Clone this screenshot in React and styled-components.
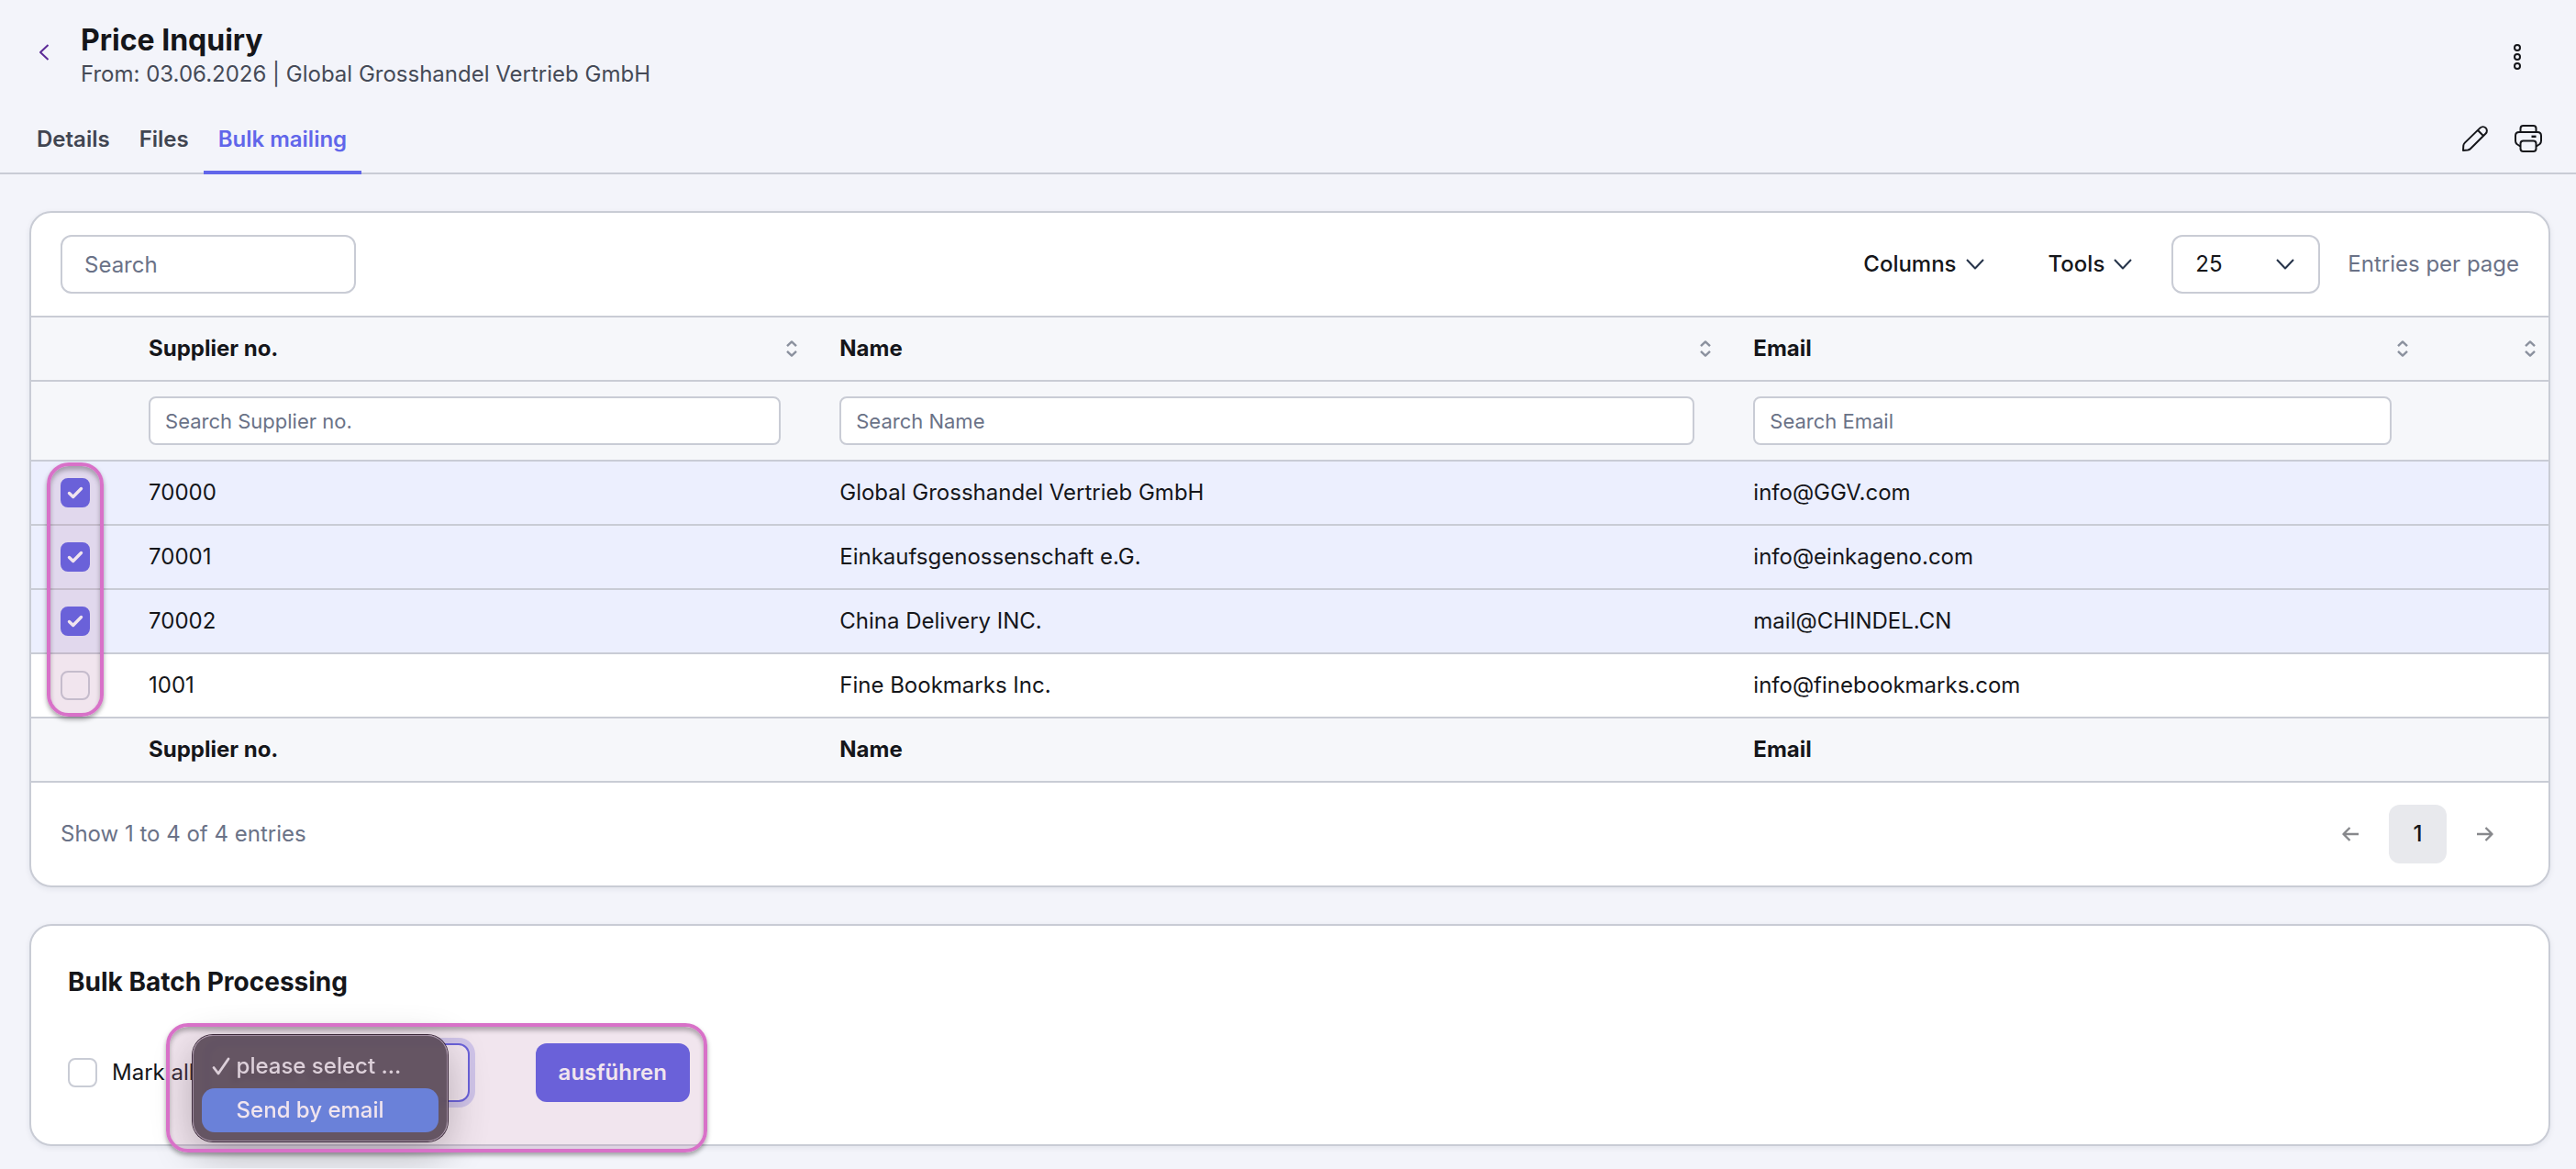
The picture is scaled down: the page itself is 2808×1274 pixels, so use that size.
import React, { useState } from 'react'
import styled, { createGlobalStyle } from 'styled-components'

const GlobalStyle = createGlobalStyle`
    *, *::before, *::after {
        box-sizing: border-box;
    }
    body {
        margin: 0;
        background: #f3f4fa;
        color: #15161a;
        font-family: Inter, "Liberation Sans", sans-serif;
        font-size: 24px;
        line-height: 32px;
    }
    button, input, select {
        font: inherit;
        color: inherit;
    }
`

const columns = [
    { key: 'no', label: 'Supplier no.' },
    { key: 'name', label: 'Name' },
    { key: 'email', label: 'Email' }
]

const suppliers = [
    { no: '70000', name: 'Global Grosshandel Vertrieb GmbH', email: 'info@GGV.com' },
    { no: '70001', name: 'Einkaufsgenossenschaft e.G.', email: 'info@einkageno.com' },
    { no: '70002', name: 'China Delivery INC.', email: 'mail@CHINDEL.CN' },
    { no: '1001', name: 'Fine Bookmarks Inc.', email: 'info@finebookmarks.com' }
]

function Chevron() {
    return (
        <Icon width="20" height="12" viewBox="0 0 20 12" stroke="#26344a">
            <path d="M1 1l9 9.5L19 1" />
        </Icon>
    )
}

function SortIcon() {
    return (
        <Icon width="12" height="18" viewBox="0 0 12 18" stroke="#8b919e" strokeWidth="2.4">
            <path d="M1 6.2l5-4.8 5 4.8M1 11.8l5 4.8 5-4.8" />
        </Icon>
    )
}

function Arrow({ flip }) {
    return (
        <Icon width="18" height="16" viewBox="0 0 18 16" stroke="#87888c" strokeWidth="2.4">
            <path d={flip ? 'M0 8h17M9.5 1l7 7-7 7' : 'M18 8H1M8.5 1l-7 7 7 7'} />
        </Icon>
    )
}

function Checkbox({ label, checked, onChange }) {
    return (
        <CheckBox>
            <input type="checkbox" aria-label={label} checked={checked} onChange={onChange} />
            {checked && (
                <Icon width="18" height="14" viewBox="0 0 18 14" stroke="#fff" strokeWidth="3.4" strokeLinecap="round">
                    <path d="M2.5 7.5l4.2 4L15.5 2.5" />
                </Icon>
            )}
        </CheckBox>
    )
}

function App() {

    const [selected, setSelected] = useState(['70000', '70001', '70002'])
    const [all, setAll] = useState(false)

    const toggle = (no) => {
        setSelected(selected.includes(no) ? selected.filter(item => item !== no) : [...selected, no])
    }

    return (
        <>
            <GlobalStyle />
            <Header>
                <BackLink href="#back" aria-label="Back">
                    <Icon width="12" height="18" viewBox="0 0 12 18" stroke="#5b2a97">
                        <path d="M10.5 1L2 9l8.5 8" />
                    </Icon>
                </BackLink>
                <div>
                    <Title>Price Inquiry</Title>
                    <Subtitle>From: 03.06.2026 | Global Grosshandel Vertrieb GmbH</Subtitle>
                </div>
                <MoreButton aria-label="More">
                    <Icon width="8" height="28" viewBox="0 0 8 28">
                        <circle cx="4" cy="4" r="3" />
                        <circle cx="4" cy="14" r="3" />
                        <circle cx="4" cy="24" r="3" />
                    </Icon>
                </MoreButton>
            </Header>
            <Nav>
                <Tab href="#details">Details</Tab>
                <Tab href="#files">Files</Tab>
                <Tab href="#bulk" $active>Bulk mailing</Tab>
                <Actions>
                    <IconButton aria-label="Edit">
                        <Icon width="28" height="28" viewBox="0 0 28 28">
                            <path d="M1 27l.3-5.5q.2-1.6 1.5-2.9L19.5 2.4a4.3 4.3 0 0 1 6.1 6.1L9.3 24.8Q7.8 26.3 6 26.6zM17 5l6 6" />
                        </Icon>
                    </IconButton>
                    <IconButton aria-label="Print">
                        <Icon width="30" height="30" viewBox="0 0 30 30">
                            <path d="M6.5 8V4q0-3 3-3h11q3 0 3 3v4" />
                            <path d="M6 23H5.5L2.5 21Q1 19.500 1 17.500v-5.500q0-4 4-4h20q4 0 4 4v5.500q0 2-1.500 3.500L24.500 23H24" />
                            <rect x="6.500" y="17.500" width="17" height="11.500" rx="3" />
                            <path d="M18.500 12.800h5" strokeWidth="2.400" />
                        </Icon>
                    </IconButton>
                </Actions>
            </Nav>
            <Main>
                <Card>
                    <Toolbar>
                        <SearchInput type="search" aria-label="Search" placeholder="Search" />
                        <ToolbarRight>
                            <MenuButton>Columns <Chevron /></MenuButton>
                            <MenuButton>Tools <Chevron /></MenuButton>
                            <SelectWrap>
                                <PageSelect id="per-page" defaultValue="25">
                                    <option>25</option>
                                    <option>50</option>
                                </PageSelect>
                                <Chevron />
                            </SelectWrap>
                            <PerPage htmlFor="per-page">Entries per page</PerPage>
                        </ToolbarRight>
                    </Toolbar>
                    <Table>
                        <colgroup>
                            <Col $width="3.5%" />
                            <Col $width="27.45%" />
                            <Col $width="36.3%" />
                            <Col $width="27.7%" />
                            <Col $width="5.05%" />
                        </colgroup>
                        <thead>
                            <Row $muted>
                                <Cell />
                                {columns.map(({ key, label }) => (
                                    <HeadCell key={key} scope="col">
                                        <HeadInner>{label} <SortIcon /></HeadInner>
                                    </HeadCell>
                                ))}
                                <HeadCell scope="col" aria-label="Actions">
                                    <HeadInner><span /><SortIcon /></HeadInner>
                                </HeadCell>
                            </Row>
                            <FilterRow $muted>
                                <Cell />
                                {columns.map(({ key, label }) => (
                                    <Cell key={key}>
                                        <FilterInput type="text" aria-label={`Search ${label}`} placeholder={`Search ${label}`} />
                                    </Cell>
                                ))}
                                <Cell />
                            </FilterRow>
                        </thead>
                        <tbody>
                            {suppliers.map(({ no, name, email }, index) => (
                                <Row key={no} $selected={selected.includes(no)}>
                                    <Cell>
                                        <Checkbox label={no} checked={selected.includes(no)} onChange={() => toggle(no)} />
                                        {index === 0 && <RowsMarker />}
                                    </Cell>
                                    <Cell>{no}</Cell>
                                    <Cell>{name}</Cell>
                                    <Cell>{email}</Cell>
                                    <Cell />
                                </Row>
                            ))}
                        </tbody>
                        <tfoot>
                            <Row $muted>
                                <Cell />
                                {columns.map(({ key, label }) => (
                                    <HeadCell key={key} scope="col">{label}</HeadCell>
                                ))}
                                <Cell />
                            </Row>
                        </tfoot>
                    </Table>
                    <TableFooter>
                        <span>Show 1 to 4 of 4 entries</span>
                        <Pagination aria-label="Pages">
                            <ArrowButton aria-label="Previous"><Arrow /></ArrowButton>
                            <PageButton aria-current="page">1</PageButton>
                            <ArrowButton aria-label="Next"><Arrow flip /></ArrowButton>
                        </Pagination>
                    </TableFooter>
                </Card>
                <BatchCard>
                    <BatchTitle>Bulk Batch Processing</BatchTitle>
                    <BatchRow>
                        <MarkAll>
                            <Checkbox label="Mark all" checked={all} onChange={() => setAll(!all)} />
                            <span>Mark all</span>
                        </MarkAll>
                        <ActionArea>
                            <ActionSelect aria-label="Action">
                                <option>please select ...</option>
                                <option>Send by email</option>
                            </ActionSelect>
                            <Menu role="listbox" aria-label="Action">
                                <MenuItem role="option" aria-selected="true">
                                    <Icon width="20" height="20" viewBox="0 0 20 20" stroke="#e6e5e6" strokeWidth="2.800" strokeLinecap="round">
                                        <path d="M2 11.500l5 6.500L18 2" />
                                    </Icon>
                                    <span>please select ...</span>
                                </MenuItem>
                                <MenuItem role="option" aria-selected="false" $active>
                                    <span>Send by email</span>
                                </MenuItem>
                            </Menu>
                            <RunButton>ausführen</RunButton>
                            <ActionMarker />
                        </ActionArea>
                    </BatchRow>
                </BatchCard>
            </Main>
        </>
    )
}

const Icon = styled.svg.attrs(props => ({
    'aria-hidden': true,
    fill: 'none',
    stroke: props.stroke || '#15161a',
    strokeWidth: props.strokeWidth || 2,
    strokeLinejoin: 'round'
}))`
    display: block;
    flex: none;
`

const Header = styled.header`
    display: flex;
    gap: 16px;
    padding: 24px 44px 14px 24px;
`

const BackLink = styled.a`
    display: flex;
    align-items: center;
    justify-content: center;
    width: 48px;
    height: 66px;
`

const Title = styled.h1`
    margin: 0;
    font-size: 32px;
    font-weight: 700;
    line-height: 40px;
`

const Subtitle = styled.p`
    margin: 0;
    line-height: 34px;
    color: #454a57;
`

const IconButton = styled.button`
    display: flex;
    align-items: center;
    justify-content: center;
    width: 36px;
    padding: 0;
    border: 0;
    background: none;
    cursor: pointer;
`

const MoreButton = styled(IconButton)`
    width: 40px;
    height: 72px;
    margin-left: auto;
    align-self: flex-end;
`

const Nav = styled.nav`
    display: flex;
    height: 78px;
    padding: 0 34px 0 24px;
    box-shadow: inset 0 -2px 0 #c9ccd5;
`

const Tab = styled.a`
    display: flex;
    align-items: center;
    padding: 2px 16px 0;
    font-weight: 600;
    text-decoration: none;
    color: ${({$active}) => $active ? '#6166ea' : '#414551'};
    ${({$active}) => $active && 'box-shadow: inset 0 -4px 0 #6166ea;'}
`

const Actions = styled.div`
    display: flex;
    gap: 22px;
    margin-left: auto;
`

const Main = styled.main`
    display: flex;
    flex-direction: column;
    gap: 40px;
    padding: 40px 28px 24px 32px;
`

const Card = styled.section`
    border: 2px solid #c9ccd5;
    border-radius: 24px;
    background: #fff;
    box-shadow: 0 2px 6px rgba(30, 35, 60, 0.08);
`

const Toolbar = styled.div`
    display: flex;
    align-items: center;
    justify-content: space-between;
    padding: 24px 32px;
`

const ToolbarRight = styled.div`
    display: flex;
    align-items: center;
    gap: 16px;
`

const SearchInput = styled.input`
    width: 322px;
    height: 64px;
    padding: 0 24px;
    border: 2px solid #c9ccd5;
    border-radius: 12px;
    background: #fff;
    outline: 0;
    &::placeholder {
        color: #6a7287;
        opacity: 1;
    }
`

const MenuButton = styled.button`
    display: flex;
    align-items: center;
    gap: 10px;
    height: 64px;
    padding: 0 27px;
    border: 0;
    background: none;
    font-weight: 500;
    cursor: pointer;
`

const SelectWrap = styled.div`
    display: flex;
    align-items: center;
    width: 162px;
    height: 64px;
    padding-right: 26px;
    border: 2px solid #c9ccd5;
    border-radius: 12px;
`

const PageSelect = styled.select`
    flex: 1;
    height: 60px;
    padding: 0 24px;
    border: 0;
    background: none;
    outline: 0;
    appearance: none;
`

const PerPage = styled.label`
    padding-left: 14px;
    color: #6a7287;
`

const Table = styled.table`
    width: 100%;
    border-collapse: separate;
    border-spacing: 0;
    table-layout: fixed;
    border-top: 2px solid #c9ccd5;
`

const Col = styled.col`
    width: ${({$width}) => $width};
`

const Cell = styled.td`
    position: relative;
    height: 70px;
    padding: 0 32px;
    border-bottom: 2px solid #c9ccd5;
    text-align: left;
`

const HeadCell = styled(Cell).attrs({ as: 'th' })`
    padding-right: 14px;
    font-weight: 700;
`

const HeadInner = styled.div`
    display: flex;
    align-items: center;
    justify-content: space-between;
`

const Row = styled.tr`
    background: ${({$muted, $selected}) => $muted ? '#f6f7fa' : $selected ? '#eceffe' : '#fff'};
`

const FilterRow = styled(Row)`
    ${Cell} {
        height: 87px;
    }
`

const FilterInput = styled(SearchInput)`
    display: block;
    width: 100%;
    height: 53px;
    padding: 0 16px;
    border-radius: 8px;
    font-size: 22px;
`

const CheckBox = styled.span`
    display: grid;
    place-items: center;
    width: 32px;
    height: 32px;
    input {
        grid-area: 1 / 1;
        appearance: none;
        width: 32px;
        height: 32px;
        margin: 0;
        border: 2px solid #c9ccd5;
        border-radius: 8px;
        background: #fff;
    }
    input:checked {
        border-color: #575be5;
        background: #575be5;
    }
    svg {
        grid-area: 1 / 1;
        position: relative;
        pointer-events: none;
    }
`

// pink frame laid over the controls that the user has to click
const Marker = styled.div`
    position: absolute;
    z-index: 2;
    border: 4px solid #d871c8;
    border-radius: 24px;
    background: rgba(185, 125, 170, 0.2);
    box-shadow: 0 3px 5px rgba(0, 0, 0, 0.35), inset 0 4px 5px rgba(0, 0, 0, 0.28);
    pointer-events: none;
`

const RowsMarker = styled(Marker)`
    top: 1px;
    left: 17px;
    width: 62px;
    height: 277px;
`

const TableFooter = styled.div`
    display: flex;
    align-items: center;
    justify-content: space-between;
    padding: 24px 32px;
    color: #6a7287;
`

const Pagination = styled.nav`
    display: flex;
    gap: 5px;
`

const PageButton = styled.button`
    width: 63px;
    height: 64px;
    padding: 0;
    border: 0;
    border-radius: 12px;
    background: #e8e9ed;
    color: #15161a;
    font-weight: 500;
`

const ArrowButton = styled(IconButton)`
    width: 74px;
    height: 64px;
`

const BatchCard = styled(Card)`
    padding: 40px 40px 46px;
`

const BatchTitle = styled.h2`
    margin: 0 0 46px;
    font-size: 28px;
    font-weight: 700;
    line-height: 42px;
`

const BatchRow = styled.div`
    display: flex;
    align-items: center;
    gap: 14px;
`

const MarkAll = styled.label`
    display: flex;
    align-items: center;
    gap: 16px;
    white-space: nowrap;
`

const ActionArea = styled.div`
    position: relative;
    display: flex;
    gap: 72px;
`

const ActionSelect = styled.select`
    width: 286px;
    height: 64px;
    padding: 0 24px;
    border: 2px solid #575be5;
    border-radius: 12px;
    background: #fff;
    box-shadow: 0 0 0 6px rgba(87, 91, 229, 0.25);
    outline: 0;
    appearance: none;
`

const Menu = styled.ul`
    position: absolute;
    z-index: 1;
    top: -9px;
    left: -16px;
    width: 278px;
    margin: 0;
    padding: 9px;
    border: 1px solid #9c93a0;
    border-radius: 22px;
    background: rgba(68, 62, 69, 0.93);
    backdrop-filter: blur(4px);
    box-shadow: 0 0 0 1px #1c141e, 0 12px 44px rgba(0, 0, 0, 0.3);
    list-style: none;
    color: #e6e5e6;
    font-weight: 500;
`

const MenuItem = styled.li`
    display: grid;
    grid-template-columns: 20px 1fr;
    align-items: center;
    gap: 7px;
    height: 48px;
    padding: 0 11px;
    border-radius: 14px;
    span {
        grid-column: 2;
    }
    ${({$active}) => $active && `
        background: #5783e5;
        color: #fff;
    `}
`

const RunButton = styled.button`
    height: 64px;
    padding: 0 25px;
    border: 0;
    border-radius: 12px;
    background: #575be5;
    color: #fff;
    font-weight: 600;
    cursor: pointer;
`

const ActionMarker = styled(Marker)`
    top: -22px;
    right: -19px;
    bottom: -55px;
    left: -45px;
`

export default App
